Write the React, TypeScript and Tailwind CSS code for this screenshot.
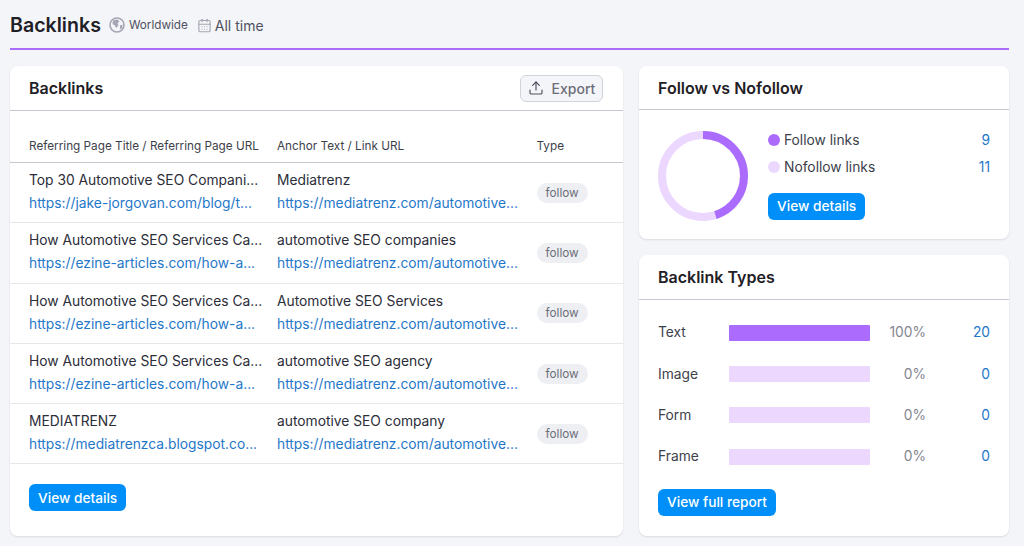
import { CalendarDays, Upload } from "lucide-react";

type Row = { title: string; url: string; anchor: string };

const rows: Row[] = [
  { title: "Top 30 Automotive SEO Compani...", url: "https://jake-jorgovan.com/blog/t...", anchor: "Mediatrenz" },
  { title: "How Automotive SEO Services Ca...", url: "https://ezine-articles.com/how-a...", anchor: "automotive SEO companies" },
  { title: "How Automotive SEO Services Ca...", url: "https://ezine-articles.com/how-a...", anchor: "Automotive SEO Services" },
  { title: "How Automotive SEO Services Ca...", url: "https://ezine-articles.com/how-a...", anchor: "automotive SEO agency" },
  { title: "MEDIATRENZ", url: "https://mediatrenzca.blogspot.co...", anchor: "automotive SEO company" },
];

const types = [
  { label: "Text", pct: "100%", count: "20", on: true },
  { label: "Image", pct: "0%", count: "0", on: false },
  { label: "Form", pct: "0%", count: "0", on: false },
  { label: "Frame", pct: "0%", count: "0", on: false },
];

function BlueButton({ label }: { label: string }) {
  return (
    <button className="h-[27px] rounded-md bg-[#008ff8] px-[9px] text-[13.7px] font-medium text-white">
      {label}
    </button>
  );
}

function Globe() {
  return (
    <svg width="16" height="16" viewBox="0 0 16 16" className="shrink-0">
      <circle cx="8" cy="8" r="7" fill="none" stroke="#a4a6b3" strokeWidth="1.6" />
      <path d="M4 3.5 L8 2.5 L10.5 4 L8.5 6.5 L9.5 8.5 L7 11 L6 8.5 L3.5 7 Z" fill="#a4a6b3" />
      <path d="M11 8.5 L13.5 7.5 L13 11 L11 12.5 Z" fill="#a4a6b3" />
    </svg>
  );
}

function Donut() {
  const r = 41;
  const c = 2 * Math.PI * r;
  return (
    <svg width="90" height="90" viewBox="0 0 90 90" className="shrink-0">
      <circle cx="45" cy="45" r={r} fill="none" stroke="#ecd8fe" strokeWidth="8" />
      <circle
        cx="45"
        cy="45"
        r={r}
        fill="none"
        stroke="#ab6cfe"
        strokeWidth="8"
        strokeDasharray={`${c * 0.45} ${c}`}
        transform="rotate(-90 45 45)"
      />
    </svg>
  );
}

export default function App() {
  return (
    <div className="h-[546px] w-[1024px] overflow-hidden bg-[#f4f5f9] pl-[10px] pr-[15px] font-['Inter',sans-serif] text-[#1f2026]">
      <header className="flex h-[50px] items-center border-b-2 border-[#ab6cfe] pt-[3px]">
        <h1 className="text-[19.6px] font-semibold leading-none">Backlinks</h1>
        <div className="ml-2 flex items-center gap-[4px] text-[11.7px] text-[#4f5160]">
          <Globe />
          Worldwide
        </div>
        <div className="ml-[9px] flex items-center gap-[4px] text-[14px] text-[#4f5160]">
          <CalendarDays size={15} strokeWidth={1.8} className="text-[#a4a6b3]" />
          <span className="-ml-[1px]">All time</span>
        </div>
      </header>

      <div className="mt-4 flex gap-4">
        <section className="h-[470px] w-[613px] rounded-lg bg-white shadow-[0_1px_2px_rgba(30,30,60,0.12)]">
          <div className="flex h-[45px] items-center justify-between border-b border-[#c4c7cf] pl-[19px] pr-5">
            <h2 className="text-[16px] font-semibold">Backlinks</h2>
            <button className="flex h-[27px] w-[83px] items-center justify-center gap-2 rounded-md border border-[#d1d4db] bg-[#f4f5f9] text-[14px] font-medium text-[#6c6e79]">
              <Upload size={16} strokeWidth={1.8} className="text-[#4f5160]" />
              Export
            </button>
          </div>

          <div className="flex h-[52px] items-end border-b border-[#c4c7cf] pb-[8px] pl-[19px] text-[11.75px] leading-[16px] text-[#3d3f4b]">
            <div className="w-[248px]">Referring Page Title / Referring Page URL</div>
            <div className="w-[259.5px]">Anchor Text / Link URL</div>
            <div>Type</div>
          </div>

          {rows.map((row, i) => (
            <div key={i} className="flex h-[60.3px] items-center border-b border-[#e6e7eb] pl-[19px] text-[13.8px]">
              <div className="w-[248px] pb-[2px]">
                <div className="whitespace-nowrap leading-[20px] text-[#2b2d38]">{row.title}</div>
                <div className="mt-[3px] whitespace-nowrap leading-[20px] text-[#1f77c9]">{row.url}</div>
              </div>
              <div className="w-[259.5px] pb-[2px]">
                <div className="whitespace-nowrap leading-[20px] text-[#2b2d38]">{row.anchor}</div>
                <div className="mt-[3px] whitespace-nowrap leading-[20px] text-[#1f77c9]">
                  https://mediatrenz.com/automotive...
                </div>
              </div>
              <span className="rounded-full bg-[#eeeff3] px-[9px] py-[2px] text-[11.75px] leading-[16px] text-[#6c6e79]">
                follow
              </span>
            </div>
          ))}

          <div className="pl-[19px] pt-[20px]">
            <BlueButton label="View details" />
          </div>
        </section>

        <div className="flex w-[370px] flex-col gap-4">
          <section className="h-[173px] rounded-lg bg-white shadow-[0_1px_2px_rgba(30,30,60,0.12)]">
            <div className="flex h-[44px] items-center border-b border-[#c4c7cf] px-[19px]">
              <h2 className="text-[16px] font-semibold">Follow vs Nofollow</h2>
            </div>
            <div className="flex items-start pl-[19px] pr-[19px] pt-[20px]">
              <div className="pt-[1px]">
                <Donut />
              </div>
              <div className="ml-5 flex-1 text-[13.8px]">
                <div className="flex h-[20px] items-center text-[#3d3f4b]">
                  <span className="mr-1 h-3 w-3 rounded-full bg-[#ab6cfe]" />
                  Follow links
                  <span className="ml-auto text-[#1f77c9]">9</span>
                </div>
                <div className="mt-[7px] flex h-[20px] items-center text-[#3d3f4b]">
                  <span className="mr-1 h-3 w-3 rounded-full bg-[#ecd8fe]" />
                  Nofollow links
                  <span className="ml-auto text-[#1f77c9]">11</span>
                </div>
                <div className="mt-[16px]">
                  <BlueButton label="View details" />
                </div>
              </div>
            </div>
          </section>

          <section className="h-[281px] rounded-lg bg-white shadow-[0_1px_2px_rgba(30,30,60,0.12)]">
            <div className="flex h-[45px] items-center border-b border-[#c4c7cf] px-[19px]">
              <h2 className="text-[16px] font-semibold">Backlink Types</h2>
            </div>
            <div className="px-[19px] pt-[12px]">
              {types.map((t) => (
                <div key={t.label} className="flex h-[41.3px] items-center text-[13.8px]">
                  <div className="w-[71px] text-[#3d3f4b]">{t.label}</div>
                  <div className={`h-4 w-[141px] rounded-[1px] ${t.on ? "bg-[#ab6cfe]" : "bg-[#ecd8fe]"}`} />
                  <div className="w-[56px] text-right text-[#84868f]">{t.pct}</div>
                  <div className="flex-1 text-right text-[#1f77c9]">{t.count}</div>
                </div>
              ))}
              <div className="mt-[12px]">
                <BlueButton label="View full report" />
              </div>
            </div>
          </section>
        </div>
      </div>
    </div>
  );
}
